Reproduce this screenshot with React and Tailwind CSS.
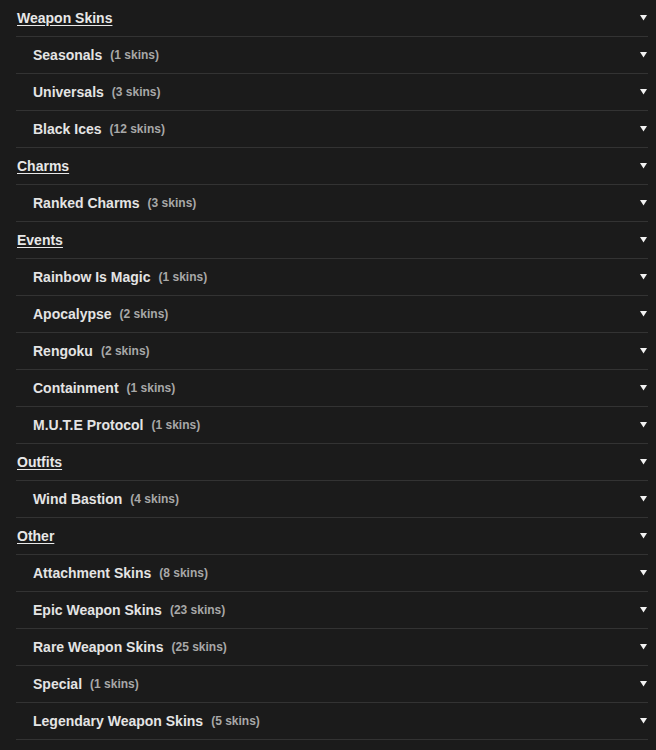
const sections = [
  {
    title: "Weapon Skins",
    items: [
      ["Seasonals", 1],
      ["Universals", 3],
      ["Black Ices", 12],
    ],
  },
  { title: "Charms", items: [["Ranked Charms", 3]] },
  {
    title: "Events",
    items: [
      ["Rainbow Is Magic", 1],
      ["Apocalypse", 2],
      ["Rengoku", 2],
      ["Containment", 1],
      ["M.U.T.E Protocol", 1],
    ],
  },
  { title: "Outfits", items: [["Wind Bastion", 4]] },
  {
    title: "Other",
    items: [
      ["Attachment Skins", 8],
      ["Epic Weapon Skins", 23],
      ["Rare Weapon Skins", 25],
      ["Special", 1],
      ["Legendary Weapon Skins", 5],
    ],
  },
];

function Caret() {
  return (
    <svg width="7" height="6" viewBox="0 0 7 6" className="shrink-0">
      <polygon points="0,0 7,0 3.5,5.5" fill="#f2f2f2" />
    </svg>
  );
}

function Row({ children, sub }) {
  return (
    <div
      className={`flex h-[37px] items-center justify-between border-b border-[#333333] pr-[1px] ${
        sub ? "pl-[17px]" : "pl-[1px]"
      }`}
    >
      {children}
      <Caret />
    </div>
  );
}

export default function App() {
  return (
    <div
      className="min-h-[750px] w-[656px] bg-[#1b1b1b] pl-4 pr-2"
      style={{ fontFamily: '"Liberation Sans", Arial, sans-serif' }}
    >
      <div className="w-[632px]">
        {sections.map((s) => (
          <div key={s.title}>
            <Row>
              <span className="text-[14px] font-bold text-[#e8e8e8] underline underline-offset-2">
                {s.title}
              </span>
            </Row>
            {s.items.map(([name, n]) => (
              <Row key={name} sub>
                <span className="flex items-center">
                  <span className="text-[14px] font-bold text-[#e4e4e4]">
                    {name}
                  </span>
                  <span className="ml-[8px] text-[12px] font-bold text-[#a8a8a8]">
                    ({n} skins)
                  </span>
                </span>
              </Row>
            ))}
          </div>
        ))}
      </div>
    </div>
  );
}
